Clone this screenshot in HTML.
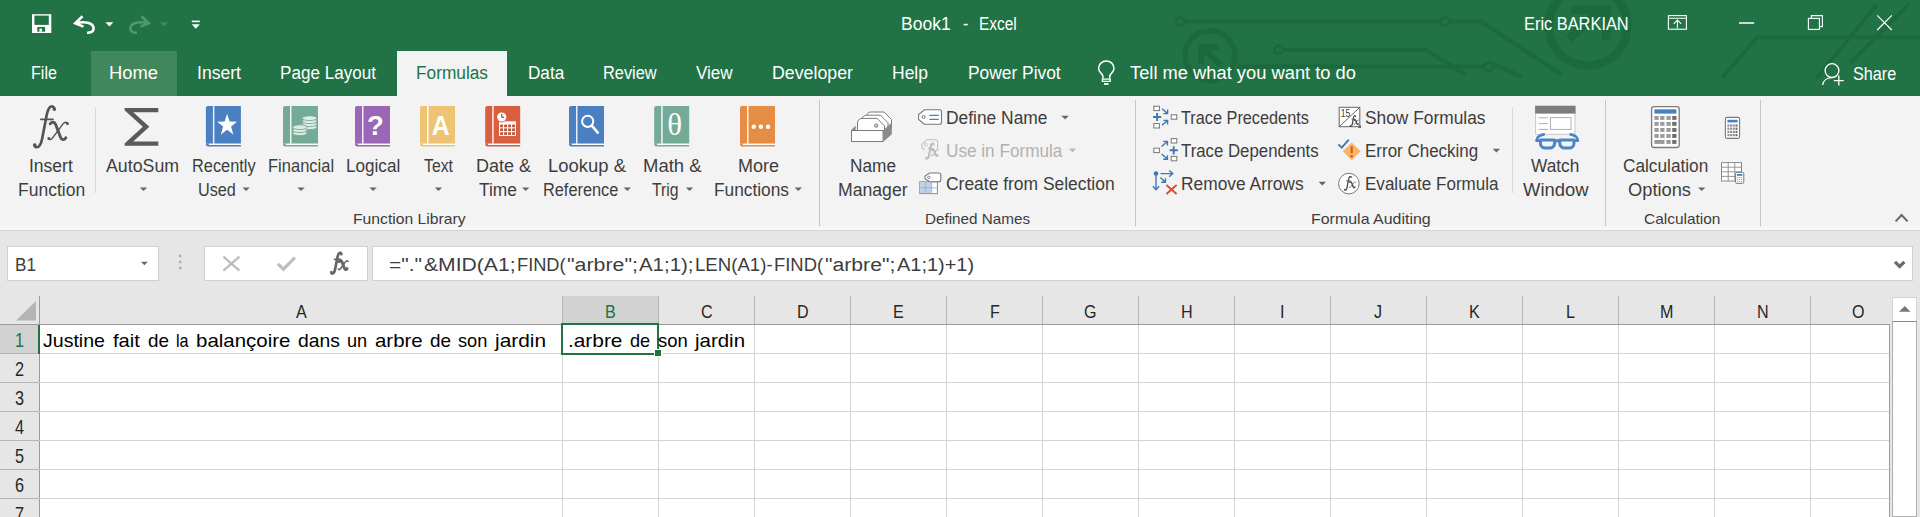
<!DOCTYPE html>
<html><head><meta charset="utf-8"><title>Book1 - Excel</title>
<style>
html,body{margin:0;padding:0;}
html{width:1920px;height:517px;overflow:hidden;}
body{width:1920px;height:517px;overflow:hidden;position:relative;background:#e6e6e6;font-family:"Liberation Sans",sans-serif;}
.t{position:absolute;white-space:nowrap;line-height:1;transform-origin:0 0;font-family:"Liberation Sans",sans-serif;}
.a{position:absolute;}
svg{position:absolute;overflow:visible;}
#green{left:0;top:0;width:1920px;height:96px;background:#217346;}
#hometab{left:91px;top:51px;width:86px;height:45px;background:#40875c;}
#acttab{left:397px;top:51px;width:110px;height:46px;background:#f3f3f3;}
#ribbon{left:0;top:96px;width:1920px;height:134px;background:#f3f3f3;}
#ribline{left:0;top:230px;width:1920px;height:1px;background:#d4d4d4;}
.vs{position:absolute;width:1px;background:#d8d8d8;}
.gs{position:absolute;width:1px;background:#c6c6c6;top:100px;height:126px;}
.box{position:absolute;background:#fff;border:1px solid #cfcfcf;box-sizing:border-box;top:246px;height:35px;}
#grid{left:40px;top:324px;width:1850px;height:193px;background:#fff;}
.hl{position:absolute;left:0;width:1890px;height:1px;background:#d4d4d4;}
.vl{position:absolute;top:325px;width:1px;height:192px;background:#d4d4d4;}
.ch{position:absolute;top:296px;width:1px;height:28px;background:#b4b4b4;}
.dd{position:absolute;width:0;height:0;border-left:4px solid transparent;border-right:4px solid transparent;border-top:4px solid #6a6a6a;}

</style></head>
<body>
<div class="a" id="green"></div>
<svg id="circuit" width="1920" height="96" viewBox="0 0 1920 96" style="left:0;top:0" fill="none" stroke="#1c693e" stroke-width="4.2" stroke-linecap="butt">
<path d="M1184.5 21.4H1440.5M1449.5 21.4H1481L1561 74.5"/>
<circle cx="1180.4" cy="21.4" r="4.2" stroke-width="3"/><circle cx="1445" cy="21.4" r="4.2" stroke-width="3"/>
<path d="M1283.2 49.8H1425.5L1466 75"/>
<circle cx="1278.8" cy="49.8" r="4.2" stroke-width="3"/>
<path d="M1237 66.6H1484.2M1493 64L1522 77"/>
<circle cx="1488.7" cy="66.8" r="4.2" stroke-width="3"/>
<circle cx="1210" cy="55.7" r="25" stroke-width="5.6"/>
<path d="M1221 65L1203 49M1201 64V47H1219" stroke-width="6"/>
<circle cx="1588" cy="26" r="39.4" stroke-width="8.4"/>
<path d="M1569 39L1600 11M1571.5 9.7H1606.3V40" stroke-width="8.6"/>
<path d="M1722 78L1757 37.4H1920" stroke-width="3.8"/>
<path d="M1817 78L1877 4M1850 63L1909 4" stroke-width="3.8"/>
</svg>
<div class="a" id="hometab"></div>
<div class="a" id="acttab"></div>
<div class="a" id="ribbon"></div>
<div class="a" style="left:0;top:227px;width:1920px;height:3px;background:#f8f8f8"></div>
<div class="a" id="ribline"></div>
<!-- separators -->
<div class="vs" style="left:95px;top:107px;height:86px"></div>
<div class="vs" style="left:1512px;top:107px;height:86px"></div>
<div class="gs" style="left:819px"></div>
<div class="gs" style="left:1135px"></div>
<div class="gs" style="left:1605px"></div>
<div class="gs" style="left:1760px"></div>
<!-- formula bar -->
<div class="box" style="left:7px;width:152px"></div>
<div class="box" style="left:204px;width:164px"></div>
<div class="box" style="left:372px;width:1541px"></div>
<!-- grid -->
<div class="a" id="grid"></div>
<div class="a" style="left:0;top:324px;width:39px;height:193px;background:#e6e6e6"></div>
<div class="a" style="left:0;top:325px;width:39px;height:29px;background:#d2d2d2"></div>
<div class="a" style="left:563px;top:296px;width:96px;height:28px;background:#d2d2d2"></div>
<div class="a" style="left:0;top:324px;width:1890px;height:1px;background:#9b9b9b"></div>
<div class="a" style="left:39px;top:296px;width:1px;height:221px;background:#9b9b9b"></div>
<div class="hl" style="top:353px"></div><div class="hl" style="top:382px"></div><div class="hl" style="top:411px"></div><div class="hl" style="top:440px"></div><div class="hl" style="top:469px"></div><div class="hl" style="top:498px"></div>
<div class="a" style="left:0;top:353px;width:39px;height:1px;background:#b4b4b4"></div><div class="a" style="left:0;top:382px;width:39px;height:1px;background:#b4b4b4"></div><div class="a" style="left:0;top:411px;width:39px;height:1px;background:#b4b4b4"></div><div class="a" style="left:0;top:440px;width:39px;height:1px;background:#b4b4b4"></div><div class="a" style="left:0;top:469px;width:39px;height:1px;background:#b4b4b4"></div><div class="a" style="left:0;top:498px;width:39px;height:1px;background:#b4b4b4"></div>
<div class="vl" style="left:562px"></div><div class="vl" style="left:658px;top:354px;height:163px"></div><div class="vl" style="left:754px"></div><div class="vl" style="left:850px"></div><div class="vl" style="left:946px"></div><div class="vl" style="left:1042px"></div><div class="vl" style="left:1138px"></div><div class="vl" style="left:1234px"></div><div class="vl" style="left:1330px"></div><div class="vl" style="left:1426px"></div><div class="vl" style="left:1522px"></div><div class="vl" style="left:1618px"></div><div class="vl" style="left:1714px"></div><div class="vl" style="left:1810px"></div>
<div class="ch" style="left:562px"></div><div class="ch" style="left:658px"></div><div class="ch" style="left:754px"></div><div class="ch" style="left:850px"></div><div class="ch" style="left:946px"></div><div class="ch" style="left:1042px"></div><div class="ch" style="left:1138px"></div><div class="ch" style="left:1234px"></div><div class="ch" style="left:1330px"></div><div class="ch" style="left:1426px"></div><div class="ch" style="left:1522px"></div><div class="ch" style="left:1618px"></div><div class="ch" style="left:1714px"></div><div class="ch" style="left:1810px"></div>
<div class="a" style="left:1889px;top:324px;width:1px;height:193px;background:#9b9b9b"></div>
<!-- select all triangle -->
<svg width="22" height="20" style="left:15px;top:301px"><path d="M21 0V19.5H1Z" fill="#b4b4b4"/></svg>
<!-- selection -->
<div class="a" style="left:38px;top:325px;width:2px;height:29px;background:#217346"></div>
<div class="a" style="left:561px;top:323px;width:94px;height:28px;border:2px solid #217346"></div>
<div class="a" style="left:654px;top:349px;width:6px;height:6px;background:#217346;border:1px solid #fff"></div>
<!-- scrollbar -->
<div class="a" style="left:1890px;top:296px;width:30px;height:221px;background:#e6e6e6"></div>
<div class="a" style="left:1892px;top:297px;width:25px;height:25px;background:#fff;border:1px solid #d4d4d4;box-sizing:border-box"></div>
<div class="a" style="left:1892px;top:321px;width:25px;height:196px;background:#fff;border:1px solid #b0b0b0;border-top-color:#8a8a8a;box-sizing:border-box"></div>
<svg width="12" height="7" style="left:1898.5px;top:306.4px"><path d="M0 5.8L5.8 0L11.6 5.8Z" fill="#777"/></svg>
<!-- ICONS -->
<!-- QAT -->
<svg width="1920" height="96" viewBox="0 0 1920 96" style="left:0;top:0">
<!-- save -->
<path d="M32 14.2H51.3V33H32Z" fill="#fff"/>
<rect x="34.4" y="15.6" width="14.4" height="9.3" fill="#217346"/>
<rect x="37.3" y="27" width="7.8" height="4.7" fill="#217346"/>
<rect x="39.4" y="28.6" width="2.6" height="3.1" fill="#fff"/>
<!-- undo -->
<path d="M82.5 16.2L75.2 23.3L83.5 26.6M76 23.2C84 21.2 93.5 22.5 93.6 28.5C93.7 31.5 90.5 33 87 32.8" fill="none" stroke="#fff" stroke-width="2.6" stroke-linejoin="miter"/>
<path d="M105.4 22.2H113.4L109.4 26.4Z" fill="#fff"/>
<!-- redo (disabled) -->
<path d="M141.5 16.2L148.8 23.3L140.5 26.6M148 23.2C140 21.2 130.5 22.5 130.4 28.5C130.3 31.5 133.5 33 137 32.8" fill="none" stroke="#4f9872" stroke-width="2.6"/>
<path d="M160.2 22.2H168.2L164.2 26.4Z" fill="#3f8a63"/>
<!-- customize -->
<rect x="191.8" y="20.6" width="8" height="1.6" fill="#fff"/>
<path d="M191.8 24.3H199.8L195.8 28.7Z" fill="#fff"/>
<!-- ribbon display options -->
<g fill="none" stroke="#fff" stroke-width="1.1">
<rect x="1668.4" y="15.6" width="18" height="13.6"/>
<path d="M1668.4 18.2H1686.4M1677.4 28.3V20.2M1673.6 23.8L1677.4 20L1681.2 23.8"/>
<!-- minimize -->
<path d="M1739 23H1754.2" stroke-width="1.5"/>
<!-- restore -->
<rect x="1808.4" y="18.4" width="11" height="11"/>
<path d="M1811.4 18.4V15.6H1822.4V26.6H1819.4"/>
<!-- close -->
<path d="M1877.2 15.3L1891.8 30M1891.8 15.3L1877.2 30"/>
</g>
<!-- lightbulb -->
<g fill="none" stroke="#fff" stroke-width="1.5">
<path d="M1102.9 78.5V76.5C1102.9 73.5 1098.6 72.5 1098.6 68.6A7.7 7.7 0 0 1 1114 68.6C1114 72.5 1109.7 73.5 1109.7 76.5V78.5"/>
<path d="M1102.4 79.2H1110.2V81.4H1102.4Z" stroke-width="1.3"/>
<path d="M1104 84H1108.6" stroke-width="1.8"/>
</g>
<!-- share -->
<g fill="none" stroke="#fff" stroke-width="1.3">
<circle cx="1832" cy="70.6" r="6.9"/>
<path d="M1822.6 85C1823.2 80.6 1827 77.8 1831.6 77.6"/>
<path d="M1838.8 75.6V85.6M1833.8 80.6H1843.8"/>
</g>
</svg>

<svg width="1920" height="517" viewBox="0 0 1920 517" style="left:0;top:0">
<g transform="translate(205.9,106)"><path d="M2 0H35V37.7H0V2A2 2 0 0 1 2 0Z" fill="#4a7fc1"/><path d="M0 37V38.3A2.2 2.2 0 0 0 2.2 40.5H35V39H3.4A0.65 0.65 0 0 1 3.4 37.7H0Z" fill="#4a7fc1"/><rect x="3.2" y="37.7" width="31.8" height="1.3" fill="#fff"/><rect x="7" y="0" width="1.5" height="37.7" fill="#fff" fill-opacity="0.88"/><polygon points="21.20,7.80 23.69,15.48 31.17,15.68 25.22,20.62 27.36,28.42 21.20,23.80 15.04,28.42 17.18,20.62 11.23,15.68 18.71,15.48" fill="#fff"/></g>
<g transform="translate(283,106)"><path d="M2 0H35V37.7H0V2A2 2 0 0 1 2 0Z" fill="#74ab97"/><path d="M0 37V38.3A2.2 2.2 0 0 0 2.2 40.5H35V39H3.4A0.65 0.65 0 0 1 3.4 37.7H0Z" fill="#74ab97"/><rect x="3.2" y="37.7" width="31.8" height="1.3" fill="#fff"/><rect x="7" y="0" width="1.5" height="37.7" fill="#fff" fill-opacity="0.88"/><ellipse cx="26.6" cy="21.2" rx="7.4" ry="2.4" fill="#dcece5" stroke="#74ab97" stroke-width="0.9"/><ellipse cx="26.6" cy="18.2" rx="7.4" ry="2.4" fill="#dcece5" stroke="#74ab97" stroke-width="0.9"/><ellipse cx="26.6" cy="15.2" rx="7.4" ry="2.4" fill="#dcece5" stroke="#74ab97" stroke-width="0.9"/><ellipse cx="26.6" cy="12.2" rx="7.4" ry="2.4" fill="#dcece5" stroke="#74ab97" stroke-width="0.9"/><ellipse cx="16.9" cy="27.2" rx="7.2" ry="2.4" fill="#dcece5" stroke="#74ab97" stroke-width="0.9"/><ellipse cx="16.9" cy="24.2" rx="7.2" ry="2.4" fill="#dcece5" stroke="#74ab97" stroke-width="0.9"/><ellipse cx="16.9" cy="21.2" rx="7.2" ry="2.4" fill="#dcece5" stroke="#74ab97" stroke-width="0.9"/></g>
<g transform="translate(355,106)"><path d="M2 0H35V37.7H0V2A2 2 0 0 1 2 0Z" fill="#9a66b6"/><path d="M0 37V38.3A2.2 2.2 0 0 0 2.2 40.5H35V39H3.4A0.65 0.65 0 0 1 3.4 37.7H0Z" fill="#9a66b6"/><rect x="3.2" y="37.7" width="31.8" height="1.3" fill="#fff"/><rect x="7" y="0" width="1.5" height="37.7" fill="#fff" fill-opacity="0.88"/><text x="20.5" y="29.2" font-family="Liberation Sans, sans-serif" font-weight="bold" font-size="27.5" fill="#fff" text-anchor="middle">?</text></g>
<g transform="translate(420,106)"><path d="M2 0H35V37.7H0V2A2 2 0 0 1 2 0Z" fill="#eec474"/><path d="M0 37V38.3A2.2 2.2 0 0 0 2.2 40.5H35V39H3.4A0.65 0.65 0 0 1 3.4 37.7H0Z" fill="#eec474"/><rect x="3.2" y="37.7" width="31.8" height="1.3" fill="#fff"/><rect x="7" y="0" width="1.5" height="37.7" fill="#fff" fill-opacity="0.88"/><text x="20.6" y="29" font-family="Liberation Sans, sans-serif" font-weight="bold" font-size="27" fill="#fff" text-anchor="middle" transform="translate(20.6 0) scale(0.92 1) translate(-20.6 0)">A</text></g>
<g transform="translate(485.2,106)"><path d="M2 0H35V37.7H0V2A2 2 0 0 1 2 0Z" fill="#d95f3f"/><path d="M0 37V38.3A2.2 2.2 0 0 0 2.2 40.5H35V39H3.4A0.65 0.65 0 0 1 3.4 37.7H0Z" fill="#d95f3f"/><rect x="3.2" y="37.7" width="31.8" height="1.3" fill="#fff"/><rect x="7" y="0" width="1.5" height="37.7" fill="#fff" fill-opacity="0.88"/><rect x="13.8" y="15.3" width="16.9" height="14.6" fill="#fff"/><rect x="14.90" y="18.60" width="2.9" height="2.7" fill="#b9553c"/><rect x="18.90" y="18.60" width="2.9" height="2.7" fill="#b9553c"/><rect x="22.90" y="18.60" width="2.9" height="2.7" fill="#b9553c"/><rect x="26.90" y="18.60" width="2.9" height="2.7" fill="#b9553c"/><rect x="14.90" y="22.40" width="2.9" height="2.7" fill="#b9553c"/><rect x="18.90" y="22.40" width="2.9" height="2.7" fill="#b9553c"/><rect x="22.90" y="22.40" width="2.9" height="2.7" fill="#b9553c"/><rect x="26.90" y="22.40" width="2.9" height="2.7" fill="#b9553c"/><rect x="14.90" y="26.20" width="2.9" height="2.7" fill="#b9553c"/><rect x="18.90" y="26.20" width="2.9" height="2.7" fill="#b9553c"/><rect x="22.90" y="26.20" width="2.9" height="2.7" fill="#b9553c"/><rect x="26.90" y="26.20" width="2.9" height="2.7" fill="#b9553c"/><circle cx="16.5" cy="11" r="5.4" fill="#d95f3f"/><circle cx="16.5" cy="11" r="4.6" fill="#fff"/><path d="M16.6 8V11.3H19" fill="none" stroke="#444" stroke-width="1"/></g>
<g transform="translate(569,106)"><path d="M2 0H35V37.7H0V2A2 2 0 0 1 2 0Z" fill="#4a7fc1"/><path d="M0 37V38.3A2.2 2.2 0 0 0 2.2 40.5H35V39H3.4A0.65 0.65 0 0 1 3.4 37.7H0Z" fill="#4a7fc1"/><rect x="3.2" y="37.7" width="31.8" height="1.3" fill="#fff"/><rect x="7" y="0" width="1.5" height="37.7" fill="#fff" fill-opacity="0.88"/><circle cx="18.7" cy="15.3" r="5.6" fill="none" stroke="#fff" stroke-width="2"/><path d="M22.8 19.7L28.8 26.6" stroke="#fff" stroke-width="2.6" stroke-linecap="round"/></g>
<g transform="translate(654.2,106)"><path d="M2 0H35V37.7H0V2A2 2 0 0 1 2 0Z" fill="#74ab97"/><path d="M0 37V38.3A2.2 2.2 0 0 0 2.2 40.5H35V39H3.4A0.65 0.65 0 0 1 3.4 37.7H0Z" fill="#74ab97"/><rect x="3.2" y="37.7" width="31.8" height="1.3" fill="#fff"/><rect x="7" y="0" width="1.5" height="37.7" fill="#fff" fill-opacity="0.88"/><text x="20.5" y="29" font-family="Liberation Serif, serif" font-size="31" fill="#fff" text-anchor="middle">θ</text></g>
<g transform="translate(740,106)"><path d="M2 0H35V37.7H0V2A2 2 0 0 1 2 0Z" fill="#e58d43"/><path d="M0 37V38.3A2.2 2.2 0 0 0 2.2 40.5H35V39H3.4A0.65 0.65 0 0 1 3.4 37.7H0Z" fill="#e58d43"/><rect x="3.2" y="37.7" width="31.8" height="1.3" fill="#fff"/><rect x="7" y="0" width="1.5" height="37.7" fill="#fff" fill-opacity="0.88"/><circle cx="13.7" cy="20.8" r="2.2" fill="#fff"/><circle cx="20.9" cy="20.8" r="2.2" fill="#fff"/><circle cx="28" cy="20.8" r="2.2" fill="#fff"/></g>
<g fill="none" stroke="#555" stroke-linecap="round" stroke-linejoin="round">
<path d="M54.4 109.2C54.6 107 52.4 105.9 50.6 106.8C48.2 108 47.4 111.6 46.6 115.6L42.2 138.4C41.2 143.4 39.8 147 36.8 147.2C35 147.3 34.2 146 34.6 144.8" stroke-width="2.7"/>
<path d="M40.8 119.3H53" stroke-width="1.7"/>
<path d="M50.2 123.8C52 121.4 54.6 121.6 55.8 124.8L60.4 137C61.6 140 63.8 140.6 65.8 137.8" stroke-width="2.9"/>
<path d="M67.6 123.8C66.8 121.6 64.6 121.8 62.6 124.4L53 137.4C51 140 49.2 140.4 48.6 138.4" stroke-width="1.5"/>
</g>
<circle cx="54.3" cy="109.2" r="1.7" fill="#555"/><circle cx="34.8" cy="145" r="1.7" fill="#555"/><circle cx="67.3" cy="123.6" r="1.5" fill="#555"/><circle cx="48.9" cy="138.6" r="1.5" fill="#555"/>
<path d="M124.6 108H158.3V112.2H133.2L149.4 126.7L133.2 141.6H158.3V145.8H124.6V143.6L142.8 126.7L124.6 110.2Z" fill="#5a5a5a"/>
</svg>
<svg width="1920" height="517" viewBox="0 0 1920 517" style="left:0;top:0">
<!-- Name Manager -->
<g stroke="#7a7a7a" stroke-width="1" fill="#fff">
<path d="M866.5 123V116.5A4.5 4.5 0 0 1 871 112H884L891.5 119.5V128H866.5Z"/>
<path d="M862 126V119.7A4.5 4.5 0 0 1 866.5 115.2H880.5L888 122.7V131H862Z"/>
<path d="M857.5 131V122.9A4.5 4.5 0 0 1 862 118.4H877L884.5 125.9V131Z"/>
<circle cx="876.2" cy="125.6" r="1.7" fill="#d0d0d0"/>
</g>
<path d="M883.3 130.3L891.8 122.5V134.3L883.3 141.8Z" fill="#8a8a8a"/>
<path d="M851 130.3L855.6 125.4V130.3Z" fill="#8a8a8a"/>
<rect x="851.5" y="130.5" width="31.5" height="11" fill="#fff" stroke="#7a7a7a"/>
<!-- Define Name -->
<path d="M924.5 109.8H939.5A2 2 0 0 1 941.5 111.8V122.2A2 2 0 0 1 939.5 124.2H924.5L918.6 119.5V114.5Z" fill="#fff" stroke="#777" stroke-width="1.1"/>
<circle cx="923.6" cy="117" r="1.5" fill="none" stroke="#777" stroke-width="1"/>
<path d="M929.4 115.4H938.8M929.4 119.3H938.8" stroke="#4a7fc1" stroke-width="1.3"/>
<!-- Use in Formula (disabled) -->
<path d="M926.8 139.8H936A1.6 1.6 0 0 1 937.6 141.4V148.5M921.8 147.5V144.2L926.8 139.8M921.8 147.5L924.6 150" fill="none" stroke="#c4c4c4" stroke-width="1.1"/>
<circle cx="925.8" cy="144.6" r="1.4" fill="none" stroke="#c4c4c4" stroke-width="0.9"/>
<g transform="translate(913.35 104.18) scale(0.37)"><g fill="none" stroke="#bdbdbd" stroke-linecap="round" stroke-linejoin="round">
<path d="M54.4 109.2C54.6 107 52.4 105.9 50.6 106.8C48.2 108 47.4 111.6 46.6 115.6L42.2 138.4C41.2 143.4 39.8 147 36.8 147.2C35 147.3 34.2 146 34.6 144.8" stroke-width="5.40"/>
<path d="M40.8 119.3H53" stroke-width="3.40"/>
<path d="M50.2 123.8C52 121.4 54.6 121.6 55.8 124.8L60.4 137C61.6 140 63.8 140.6 65.8 137.8" stroke-width="5.80"/>
<path d="M67.6 123.8C66.8 121.6 64.6 121.8 62.6 124.4L53 137.4C51 140 49.2 140.4 48.6 138.4" stroke-width="3.00"/>
</g></g>
<!-- Create from Selection -->
<rect x="919.8" y="181.8" width="17.6" height="11.8" fill="#fff" stroke="#8a8a8a" stroke-width="1"/>
<rect x="920.3" y="182.3" width="11.4" height="10.8" fill="#bdd0e9"/>
<path d="M925.7 181.8V193.6M931.7 181.8V193.6M919.8 187.8H937.4" stroke="#9ab0cf" stroke-width="0.8"/>
<path d="M929.6 173H938.8A2 2 0 0 1 940.8 175V179.8A2 2 0 0 1 938.8 181.8H929.6L925 178.8V176Z" fill="#fff" stroke="#777" stroke-width="1.1"/>
<circle cx="928.8" cy="177.4" r="1.2" fill="none" stroke="#777" stroke-width="0.9"/>
<!-- Trace Precedents -->
<g fill="#fff" stroke="#777" stroke-width="1">
<rect x="1153.8" y="106.2" width="5.6" height="4.4"/>
<rect x="1153.8" y="123.6" width="5.6" height="4.4"/>
<rect x="1171.2" y="114.8" width="5.6" height="4.4"/>
<!-- dependents -->
<rect x="1153.8" y="148.2" width="5.6" height="4.4"/>
<rect x="1171.2" y="138.6" width="5.6" height="4.4"/>
<rect x="1171.2" y="156.4" width="5.6" height="4.4"/>
</g>
<g fill="none" stroke="#3e78b4" stroke-width="1.4">
<path d="M1153 117H1161.2M1157.1 112.9V121.1" stroke-width="1.9"/>
<path d="M1162 108.8L1167.4 113.4M1167.6 109.6V113.6H1163.4"/>
<path d="M1162 125.2L1167.4 120.6M1167.6 124.4V120.4H1163.4"/>
<path d="M1169.6 150.3H1177.8M1173.7 146.2V154.4" stroke-width="1.9"/>
<path d="M1161.6 146.6L1167 141.8M1163.2 141.4H1167.4V145.4"/>
<path d="M1161.6 154L1167 158.8M1163.2 159.2H1167.4V155.2"/>
<!-- remove arrows -->
<path d="M1156 175.5V189.6M1152.8 186.2L1156 189.8L1159.2 186.2"/>
<path d="M1160.5 173.6H1172.6M1169.2 170.4L1172.8 173.6L1169.2 176.8"/>
<path d="M1160.4 177.4L1165 181.8M1161.2 182.2H1165.4V178.2"/>
</g>
<circle cx="1156" cy="173.6" r="2.3" fill="#3e78b4"/>
<path d="M1166.4 185L1176.6 194M1176.6 185L1166.4 194" stroke="#d4492f" stroke-width="1.8" fill="none"/>
<!-- Show Formulas -->
<rect x="1339.2" y="107.3" width="20.6" height="19.4" fill="#fff" stroke="#666" stroke-width="1"/>
<path d="M1339.2 126.7L1359.8 107.3" stroke="#666" stroke-width="1"/>
<rect x="1358.4" y="125.4" width="2.6" height="2.6" fill="#666"/>
<text x="1340.8" y="116.8" font-family="Liberation Sans, sans-serif" font-size="11.5" fill="#3a3a3a" textLength="9.6" lengthAdjust="spacingAndGlyphs">15</text>
<g transform="translate(1341.29 88.04) scale(0.26)"><g fill="none" stroke="#4a4a4a" stroke-linecap="round" stroke-linejoin="round">
<path d="M54.4 109.2C54.6 107 52.4 105.9 50.6 106.8C48.2 108 47.4 111.6 46.6 115.6L42.2 138.4C41.2 143.4 39.8 147 36.8 147.2C35 147.3 34.2 146 34.6 144.8" stroke-width="4.86"/>
<path d="M40.8 119.3H53" stroke-width="3.06"/>
<path d="M50.2 123.8C52 121.4 54.6 121.6 55.8 124.8L60.4 137C61.6 140 63.8 140.6 65.8 137.8" stroke-width="5.22"/>
<path d="M67.6 123.8C66.8 121.6 64.6 121.8 62.6 124.4L53 137.4C51 140 49.2 140.4 48.6 138.4" stroke-width="2.70"/>
</g></g>
<!-- Error Checking -->
<path d="M1351.7 142.4L1360.6 151.3L1351.7 160.2L1342.8 151.3Z" fill="#f5b763"/>
<path d="M1351.7 146.2V153.2" stroke="#d8532b" stroke-width="2"/>
<circle cx="1351.7" cy="156.2" r="1.2" fill="#d8532b"/>
<path d="M1338.4 144.4L1341.8 147.6L1348.8 139.6" fill="none" stroke="#3e78b4" stroke-width="1.9"/>
<!-- Evaluate Formula -->
<circle cx="1348.9" cy="183.6" r="10.3" fill="#fff" stroke="#777" stroke-width="1"/>
<g transform="translate(1332.91 140.89) scale(0.335)"><g fill="none" stroke="#4a4a4a" stroke-linecap="round" stroke-linejoin="round">
<path d="M54.4 109.2C54.6 107 52.4 105.9 50.6 106.8C48.2 108 47.4 111.6 46.6 115.6L42.2 138.4C41.2 143.4 39.8 147 36.8 147.2C35 147.3 34.2 146 34.6 144.8" stroke-width="3.86"/>
<path d="M40.8 119.3H53" stroke-width="2.43"/>
<path d="M50.2 123.8C52 121.4 54.6 121.6 55.8 124.8L60.4 137C61.6 140 63.8 140.6 65.8 137.8" stroke-width="4.14"/>
<path d="M67.6 123.8C66.8 121.6 64.6 121.8 62.6 124.4L53 137.4C51 140 49.2 140.4 48.6 138.4" stroke-width="2.14"/>
</g></g>
<!-- Watch Window -->
<rect x="1535.6" y="106.3" width="39.4" height="28" fill="#fff" stroke="#c8c8c8" stroke-width="1"/>
<rect x="1535.1" y="105.8" width="40.4" height="7.8" fill="#7c7c7c"/>
<path d="M1538.6 117.8H1548M1538.6 123.6H1548M1538.6 129.4H1548" stroke="#b0b0b0" stroke-width="1"/>
<rect x="1550.4" y="117.6" width="20.6" height="11.8" fill="#fff" stroke="#b0b0b0" stroke-width="1"/>
<g fill="#f3f3f3" stroke="#4a86c5" stroke-width="3" stroke-linejoin="round">
<path d="M1540.4 140H1554.6V143.2A4.8 4.8 0 0 1 1549.8 148H1545.2A4.8 4.8 0 0 1 1540.4 143.2Z"/>
<path d="M1559.8 140H1574V143.2A4.8 4.8 0 0 1 1569.2 148H1564.6A4.8 4.8 0 0 1 1559.8 143.2Z"/>
<path d="M1554.6 140.8H1559.8" stroke-width="3.2"/>
<path d="M1540.4 140.6H1536.4C1536.6 137 1540.6 134.4 1544.8 134.4M1574 140.6H1578C1577.8 137 1573.8 134.4 1569.6 134.4" fill="none" stroke-width="2.6"/>
</g>
<!-- Calculation Options -->
<rect x="1651.6" y="106.7" width="27.6" height="40.8" rx="2.5" fill="#fff" stroke="#7a7a7a" stroke-width="1.3"/>
<rect x="1654.4" y="109.3" width="22" height="4.3" fill="#4a7fc1"/>
<rect x="1654.4" y="116" width="4.3" height="3.9" fill="#9a9a9a"/><rect x="1660.2" y="116" width="4.3" height="3.9" fill="#9a9a9a"/><rect x="1666.4" y="116" width="4.3" height="3.9" fill="#9a9a9a"/><rect x="1672.2" y="116" width="4.3" height="3.9" fill="#6e6e6e"/><rect x="1654.4" y="121.9" width="4.3" height="3.9" fill="#9a9a9a"/><rect x="1660.2" y="121.9" width="4.3" height="3.9" fill="#9a9a9a"/><rect x="1666.4" y="121.9" width="4.3" height="3.9" fill="#9a9a9a"/><rect x="1672.2" y="121.9" width="4.3" height="3.9" fill="#6e6e6e"/><rect x="1654.4" y="128" width="4.3" height="3.9" fill="#9a9a9a"/><rect x="1660.2" y="128" width="4.3" height="3.9" fill="#9a9a9a"/><rect x="1666.4" y="128" width="4.3" height="3.9" fill="#9a9a9a"/><rect x="1672.2" y="128" width="4.3" height="3.9" fill="#6e6e6e"/><rect x="1654.4" y="134" width="4.3" height="3.9" fill="#9a9a9a"/><rect x="1660.2" y="134" width="4.3" height="3.9" fill="#9a9a9a"/><rect x="1666.4" y="134" width="4.3" height="3.9" fill="#9a9a9a"/><rect x="1672.2" y="134" width="4.3" height="3.9" fill="#6e6e6e"/><rect x="1654.4" y="140" width="10.1" height="3.9" fill="#9a9a9a"/><rect x="1666.4" y="140" width="4.3" height="3.9" fill="#9a9a9a"/><rect x="1672.2" y="140" width="4.3" height="3.9" fill="#6e6e6e"/>
<!-- Calc Now -->
<rect x="1725.4" y="117.4" width="14.2" height="21" rx="1.6" fill="#fff" stroke="#7a7a7a" stroke-width="1.1"/>
<rect x="1727.4" y="119.8" width="10.2" height="2.6" fill="#4a7fc1"/>
<rect x="1727.4" y="124.4" width="2" height="2.2" fill="#8e8e8e"/><rect x="1730.1" y="124.4" width="2" height="2.2" fill="#8e8e8e"/><rect x="1732.8" y="124.4" width="2" height="2.2" fill="#8e8e8e"/><rect x="1735.5" y="124.4" width="2" height="2.2" fill="#6e6e6e"/><rect x="1727.4" y="127.6" width="2" height="2.2" fill="#8e8e8e"/><rect x="1730.1" y="127.6" width="2" height="2.2" fill="#8e8e8e"/><rect x="1732.8" y="127.6" width="2" height="2.2" fill="#8e8e8e"/><rect x="1735.5" y="127.6" width="2" height="2.2" fill="#6e6e6e"/><rect x="1727.4" y="130.8" width="2" height="2.2" fill="#8e8e8e"/><rect x="1730.1" y="130.8" width="2" height="2.2" fill="#8e8e8e"/><rect x="1732.8" y="130.8" width="2" height="2.2" fill="#8e8e8e"/><rect x="1735.5" y="130.8" width="2" height="2.2" fill="#6e6e6e"/><rect x="1727.4" y="134.0" width="2" height="2.2" fill="#8e8e8e"/><rect x="1730.1" y="134.0" width="2" height="2.2" fill="#8e8e8e"/><rect x="1732.8" y="134.0" width="2" height="2.2" fill="#8e8e8e"/><rect x="1735.5" y="134.0" width="2" height="2.2" fill="#6e6e6e"/>
<!-- Calc Sheet -->
<rect x="1721.5" y="162.6" width="20" height="18.4" fill="#fff" stroke="#8a8a8a" stroke-width="1"/>
<path d="M1721.5 167.2H1741.5M1721.5 171.8H1741.5M1721.5 176.4H1741.5M1728.2 162.6V181M1734.8 162.6V181" stroke="#8a8a8a" stroke-width="0.9"/>
<rect x="1735.6" y="172.4" width="8.2" height="11" rx="1.2" fill="#fff" stroke="#7a7a7a" stroke-width="1"/>
<rect x="1737" y="174" width="5.4" height="1.8" fill="#4a7fc1"/>
<path d="M1737.2 177.6H1742.2M1737.2 179.6H1742.2M1737.2 181.6H1742.2" stroke="#999" stroke-width="0.9" stroke-dasharray="1.2 0.7"/>
<!-- collapse chevron -->
<path d="M1895.6 221.4L1901.6 215L1907.6 221.4" fill="none" stroke="#666" stroke-width="2"/>
<!-- formula bar -->
<path d="M141 261.8H147.8L144.4 265.2Z" fill="#666"/>
<circle cx="180.2" cy="255.9" r="1.3" fill="#ababab"/><circle cx="180.2" cy="261.9" r="1.3" fill="#ababab"/><circle cx="180.2" cy="267.9" r="1.3" fill="#ababab"/>
<path d="M223.4 256.6L239.4 270.6M239.4 256.6L223.4 270.6" stroke="#bcbcbc" stroke-width="2.2" fill="none"/>
<path d="M277.9 263.9L283.4 269.2L294.9 257.6" stroke="#bebebe" stroke-width="3.1" fill="none"/>
<g transform="translate(313.88 199.07) scale(0.505)"><g fill="none" stroke="#666" stroke-linecap="round" stroke-linejoin="round">
<path d="M54.4 109.2C54.6 107 52.4 105.9 50.6 106.8C48.2 108 47.4 111.6 46.6 115.6L42.2 138.4C41.2 143.4 39.8 147 36.8 147.2C35 147.3 34.2 146 34.6 144.8" stroke-width="5.40"/>
<path d="M40.8 119.3H53" stroke-width="3.40"/>
<path d="M50.2 123.8C52 121.4 54.6 121.6 55.8 124.8L60.4 137C61.6 140 63.8 140.6 65.8 137.8" stroke-width="5.80"/>
<path d="M67.6 123.8C66.8 121.6 64.6 121.8 62.6 124.4L53 137.4C51 140 49.2 140.4 48.6 138.4" stroke-width="3.00"/>
</g></g>
<path d="M1895 261.8L1899.7 266.4L1904.4 261.8" fill="none" stroke="#6a6a6a" stroke-width="3.2"/>
</svg>

<svg width="1920" height="517" viewBox="0 0 1920 517" style="left:0;top:0">
<path d="M139.8 187.4H147.2L143.5 191.1Z" fill="#666"/>
<path d="M242.4 187.4H249.8L246.1 191.1Z" fill="#666"/>
<path d="M297.3 187.4H304.7L301.0 191.1Z" fill="#666"/>
<path d="M369.4 187.4H376.8L373.1 191.1Z" fill="#666"/>
<path d="M434.8 187.4H442.2L438.5 191.1Z" fill="#666"/>
<path d="M522 187.4H529.4L525.7 191.1Z" fill="#666"/>
<path d="M623.6 187.4H631.0L627.3 191.1Z" fill="#666"/>
<path d="M685.8 187.4H693.2L689.5 191.1Z" fill="#666"/>
<path d="M794.6 187.4H802.0L798.3 191.1Z" fill="#666"/>
<path d="M1698 187.4H1705.4L1701.7 191.1Z" fill="#666"/>
<path d="M1061.4 115.8H1068.8L1065.1 119.5Z" fill="#666"/>
<path d="M1068.8 148.6H1076.2L1072.5 152.3Z" fill="#b8b8b8"/>
<path d="M1318.6 181.8H1326.0L1322.3 185.5Z" fill="#666"/>
<path d="M1492.7 148.8H1500.1L1496.4 152.5Z" fill="#666"/>
</svg>


<span class="t" style="font-size:18px;color:#fff;top:15.00px;left:901.00px;transform:scaleX(0.9736);">Book1</span>
<span class="t" style="font-size:18px;color:#fff;top:15.00px;left:962.70px;transform:scaleX(0.8833);">-</span>
<span class="t" style="font-size:18px;color:#fff;top:15.00px;left:979.00px;transform:scaleX(0.8565);">Excel</span>
<span class="t" style="font-size:18px;color:#fff;top:15.00px;left:1524.00px;transform:scaleX(0.9102);">Eric BARKIAN</span>
<span class="t" style="font-size:18px;color:#fff;top:64.00px;left:31.40px;transform:scaleX(0.8961);">File</span>
<span class="t" style="font-size:18px;color:#fff;top:64.00px;left:109.00px;transform:scaleX(1.0205);">Home</span>
<span class="t" style="font-size:18px;color:#fff;top:64.00px;left:197.00px;transform:scaleX(0.9771);">Insert</span>
<span class="t" style="font-size:18px;color:#fff;top:64.00px;left:280.00px;transform:scaleX(0.9496);">Page Layout</span>
<span class="t" style="font-size:18px;color:#217346;top:64.00px;left:415.50px;transform:scaleX(0.9598);">Formulas</span>
<span class="t" style="font-size:18px;color:#fff;top:64.00px;left:527.50px;transform:scaleX(0.9518);">Data</span>
<span class="t" style="font-size:18px;color:#fff;top:64.00px;left:603.00px;transform:scaleX(0.9097);">Review</span>
<span class="t" style="font-size:18px;color:#fff;top:64.00px;left:696.00px;transform:scaleX(0.9482);">View</span>
<span class="t" style="font-size:18px;color:#fff;top:64.00px;left:772.30px;transform:scaleX(0.9872);">Developer</span>
<span class="t" style="font-size:18px;color:#fff;top:64.00px;left:892.30px;transform:scaleX(0.9722);">Help</span>
<span class="t" style="font-size:18px;color:#fff;top:64.00px;left:968.30px;transform:scaleX(0.9652);">Power Pivot</span>
<span class="t" style="font-size:18px;color:#fff;top:64.00px;left:1130.00px;transform:scaleX(1.0174);">Tell me what you want to do</span>
<span class="t" style="font-size:18px;color:#fff;top:65.00px;left:1852.70px;transform:scaleX(0.9012);">Share</span>
<span class="t" style="font-size:17.5px;color:#3d3d3d;top:158.00px;left:29.20px;transform:scaleX(1.0004);">Insert</span>
<span class="t" style="font-size:17.5px;color:#3d3d3d;top:182.00px;left:17.60px;transform:scaleX(1.0011);">Function</span>
<span class="t" style="font-size:17.5px;color:#3d3d3d;top:158.00px;left:105.60px;transform:scaleX(1.0155);">AutoSum</span>
<span class="t" style="font-size:17.5px;color:#3d3d3d;top:158.00px;left:191.70px;transform:scaleX(0.9340);">Recently</span>
<span class="t" style="font-size:17.5px;color:#3d3d3d;top:182.00px;left:197.70px;transform:scaleX(0.9276);">Used</span>
<span class="t" style="font-size:17.5px;color:#3d3d3d;top:158.00px;left:267.50px;transform:scaleX(0.9437);">Financial</span>
<span class="t" style="font-size:17.5px;color:#3d3d3d;top:158.00px;left:345.80px;transform:scaleX(0.9771);">Logical</span>
<span class="t" style="font-size:17.5px;color:#3d3d3d;top:158.00px;left:423.80px;transform:scaleX(0.9032);">Text</span>
<span class="t" style="font-size:17.5px;color:#3d3d3d;top:158.00px;left:475.80px;transform:scaleX(1.0280);">Date &amp;</span>
<span class="t" style="font-size:17.5px;color:#3d3d3d;top:182.00px;left:478.50px;transform:scaleX(0.9908);">Time</span>
<span class="t" style="font-size:17.5px;color:#3d3d3d;top:158.00px;left:547.60px;transform:scaleX(1.0547);">Lookup &amp;</span>
<span class="t" style="font-size:17.5px;color:#3d3d3d;top:182.00px;left:542.70px;transform:scaleX(0.9325);">Reference</span>
<span class="t" style="font-size:17.5px;color:#3d3d3d;top:158.00px;left:642.90px;transform:scaleX(1.0549);">Math &amp;</span>
<span class="t" style="font-size:17.5px;color:#3d3d3d;top:182.00px;left:652.40px;transform:scaleX(0.9017);">Trig</span>
<span class="t" style="font-size:17.5px;color:#3d3d3d;top:158.00px;left:738.00px;transform:scaleX(1.0282);">More</span>
<span class="t" style="font-size:17.5px;color:#3d3d3d;top:182.00px;left:713.60px;transform:scaleX(0.9885);">Functions</span>
<span class="t" style="font-size:17.5px;color:#3d3d3d;top:158.00px;left:849.80px;transform:scaleX(0.9853);">Name</span>
<span class="t" style="font-size:17.5px;color:#3d3d3d;top:182.00px;left:837.60px;transform:scaleX(1.0076);">Manager</span>
<span class="t" style="font-size:17.5px;color:#3d3d3d;top:158.00px;left:1531.00px;transform:scaleX(0.9867);">Watch</span>
<span class="t" style="font-size:17.5px;color:#3d3d3d;top:182.00px;left:1522.50px;transform:scaleX(1.0522);">Window</span>
<span class="t" style="font-size:17.5px;color:#3d3d3d;top:158.00px;left:1623.20px;transform:scaleX(0.9852);">Calculation</span>
<span class="t" style="font-size:17.5px;color:#3d3d3d;top:182.00px;left:1628.00px;transform:scaleX(1.0446);">Options</span>
<span class="t" style="font-size:17.5px;color:#3d3d3d;top:110.00px;left:946.00px;transform:scaleX(0.9937);">Define Name</span>
<span class="t" style="font-size:17.5px;color:#b1b1b1;top:143.00px;left:946.00px;transform:scaleX(0.9810);">Use in Formula</span>
<span class="t" style="font-size:17.5px;color:#3d3d3d;top:176.00px;left:946.00px;transform:scaleX(0.9962);">Create from Selection</span>
<span class="t" style="font-size:17.5px;color:#3d3d3d;top:110.00px;left:1181.40px;transform:scaleX(0.9303);">Trace Precedents</span>
<span class="t" style="font-size:17.5px;color:#3d3d3d;top:143.00px;left:1181.40px;transform:scaleX(0.9600);">Trace Dependents</span>
<span class="t" style="font-size:17.5px;color:#3d3d3d;top:176.00px;left:1181.40px;transform:scaleX(0.9926);">Remove Arrows</span>
<span class="t" style="font-size:17.5px;color:#3d3d3d;top:110.00px;left:1364.80px;transform:scaleX(0.9911);">Show Formulas</span>
<span class="t" style="font-size:17.5px;color:#3d3d3d;top:143.00px;left:1364.80px;transform:scaleX(0.9699);">Error Checking</span>
<span class="t" style="font-size:17.5px;color:#3d3d3d;top:176.00px;left:1364.80px;transform:scaleX(0.9733);">Evaluate Formula</span>
<span class="t" style="font-size:15px;color:#3d3d3d;top:211.00px;left:353.40px;transform:scaleX(1.0468);">Function Library</span>
<span class="t" style="font-size:15px;color:#3d3d3d;top:211.00px;left:924.80px;transform:scaleX(1.0165);">Defined Names</span>
<span class="t" style="font-size:15px;color:#3d3d3d;top:211.00px;left:1310.90px;transform:scaleX(1.0634);">Formula Auditing</span>
<span class="t" style="font-size:15px;color:#3d3d3d;top:211.00px;left:1644.30px;transform:scaleX(1.0294);">Calculation</span>
<span class="t" style="font-size:18px;color:#3d3d3d;top:256.00px;left:15.00px;transform:scaleX(0.9532);">B1</span>
<span class="t" style="font-size:18px;color:#3d3d3d;top:256.00px;left:389.00px;transform:scaleX(1.1662);">=&quot;.&quot;</span>
<span class="t" style="font-size:18px;color:#3d3d3d;top:256.00px;left:424.00px;transform:scaleX(1.1728);">&amp;MID(A1;</span>
<span class="t" style="font-size:18px;color:#3d3d3d;top:256.00px;left:516.70px;transform:scaleX(1.0125);">FIND(</span>
<span class="t" style="font-size:18px;color:#3d3d3d;top:256.00px;left:566.70px;transform:scaleX(1.1854);">&quot;arbre&quot;;</span>
<span class="t" style="font-size:18px;color:#3d3d3d;top:256.00px;left:639.00px;transform:scaleX(1.1347);">A1;1);</span>
<span class="t" style="font-size:18px;color:#3d3d3d;top:256.00px;left:695.00px;transform:scaleX(1.0345);">LEN(A1)-</span>
<span class="t" style="font-size:18px;color:#3d3d3d;top:256.00px;left:774.20px;transform:scaleX(1.0229);">FIND(</span>
<span class="t" style="font-size:18px;color:#3d3d3d;top:256.00px;left:825.00px;transform:scaleX(1.1753);">&quot;arbre&quot;;</span>
<span class="t" style="font-size:18px;color:#3d3d3d;top:256.00px;left:896.70px;transform:scaleX(1.1086);">A1;1)+1)</span>
<span class="t" style="font-size:19.2px;color:#262626;top:302.00px;left:296.32px;transform:scaleX(0.84);">A</span>
<span class="t" style="font-size:19.2px;color:#217346;top:302.00px;left:604.62px;transform:scaleX(0.84);">B</span>
<span class="t" style="font-size:19.2px;color:#262626;top:302.00px;left:700.68px;transform:scaleX(0.84);">C</span>
<span class="t" style="font-size:19.2px;color:#262626;top:302.00px;left:796.68px;transform:scaleX(0.84);">D</span>
<span class="t" style="font-size:19.2px;color:#262626;top:302.00px;left:893.12px;transform:scaleX(0.84);">E</span>
<span class="t" style="font-size:19.2px;color:#262626;top:302.00px;left:989.57px;transform:scaleX(0.84);">F</span>
<span class="t" style="font-size:19.2px;color:#262626;top:302.00px;left:1084.23px;transform:scaleX(0.84);">G</span>
<span class="t" style="font-size:19.2px;color:#262626;top:302.00px;left:1180.68px;transform:scaleX(0.84);">H</span>
<span class="t" style="font-size:19.2px;color:#262626;top:302.00px;left:1280.26px;transform:scaleX(0.84);">I</span>
<span class="t" style="font-size:19.2px;color:#262626;top:302.00px;left:1374.47px;transform:scaleX(0.84);">J</span>
<span class="t" style="font-size:19.2px;color:#262626;top:302.00px;left:1469.12px;transform:scaleX(0.84);">K</span>
<span class="t" style="font-size:19.2px;color:#262626;top:302.00px;left:1566.02px;transform:scaleX(0.84);">L</span>
<span class="t" style="font-size:19.2px;color:#262626;top:302.00px;left:1659.79px;transform:scaleX(0.84);">M</span>
<span class="t" style="font-size:19.2px;color:#262626;top:302.00px;left:1756.68px;transform:scaleX(0.84);">N</span>
<span class="t" style="font-size:19.2px;color:#262626;top:302.00px;left:1851.73px;transform:scaleX(0.84);">O</span>
<span class="t" style="font-size:19.8px;color:#217346;top:331.00px;left:14.88px;transform:scaleX(0.82);">1</span>
<span class="t" style="font-size:19.8px;color:#262626;top:360.00px;left:14.88px;transform:scaleX(0.82);">2</span>
<span class="t" style="font-size:19.8px;color:#262626;top:389.00px;left:14.88px;transform:scaleX(0.82);">3</span>
<span class="t" style="font-size:19.8px;color:#262626;top:418.00px;left:14.88px;transform:scaleX(0.82);">4</span>
<span class="t" style="font-size:19.8px;color:#262626;top:447.00px;left:14.88px;transform:scaleX(0.82);">5</span>
<span class="t" style="font-size:19.8px;color:#262626;top:476.00px;left:14.88px;transform:scaleX(0.82);">6</span>
<span class="t" style="font-size:19.8px;color:#262626;top:505.00px;left:14.88px;transform:scaleX(0.82);">7</span>
<span class="t" style="font-size:18.4px;color:#000;top:332.00px;left:42.50px;transform:scaleX(1.0621);">Justine</span>
<span class="t" style="font-size:18.4px;color:#000;top:332.00px;left:113.30px;transform:scaleX(1.0959);">fait</span>
<span class="t" style="font-size:18.4px;color:#000;top:332.00px;left:147.50px;transform:scaleX(1.0260);">de</span>
<span class="t" style="font-size:18.4px;color:#000;top:332.00px;left:175.60px;transform:scaleX(0.8794);">la</span>
<span class="t" style="font-size:18.4px;color:#000;top:332.00px;left:195.80px;transform:scaleX(1.1124);">balançoire</span>
<span class="t" style="font-size:18.4px;color:#000;top:332.00px;left:297.50px;transform:scaleX(1.0504);">dans</span>
<span class="t" style="font-size:18.4px;color:#000;top:332.00px;left:346.70px;transform:scaleX(0.9869);">un</span>
<span class="t" style="font-size:18.4px;color:#000;top:332.00px;left:375.00px;transform:scaleX(1.1109);">arbre</span>
<span class="t" style="font-size:18.4px;color:#000;top:332.00px;left:430.00px;transform:scaleX(1.0260);">de</span>
<span class="t" style="font-size:18.4px;color:#000;top:332.00px;left:458.30px;transform:scaleX(0.9914);">son</span>
<span class="t" style="font-size:18.4px;color:#000;top:332.00px;left:495.00px;transform:scaleX(1.1337);">jardin</span>
<span class="t" style="font-size:18.4px;color:#000;top:332.00px;left:567.50px;transform:scaleX(1.1322);">.arbre</span>
<span class="t" style="font-size:18.4px;color:#000;top:332.00px;left:630.00px;transform:scaleX(0.9869);">de</span>
<span class="t" style="font-size:18.4px;color:#000;top:332.00px;left:657.50px;transform:scaleX(1.0015);">son</span>
<span class="t" style="font-size:18.4px;color:#000;top:332.00px;left:694.50px;transform:scaleX(1.1115);">jardin</span>
</body></html>
